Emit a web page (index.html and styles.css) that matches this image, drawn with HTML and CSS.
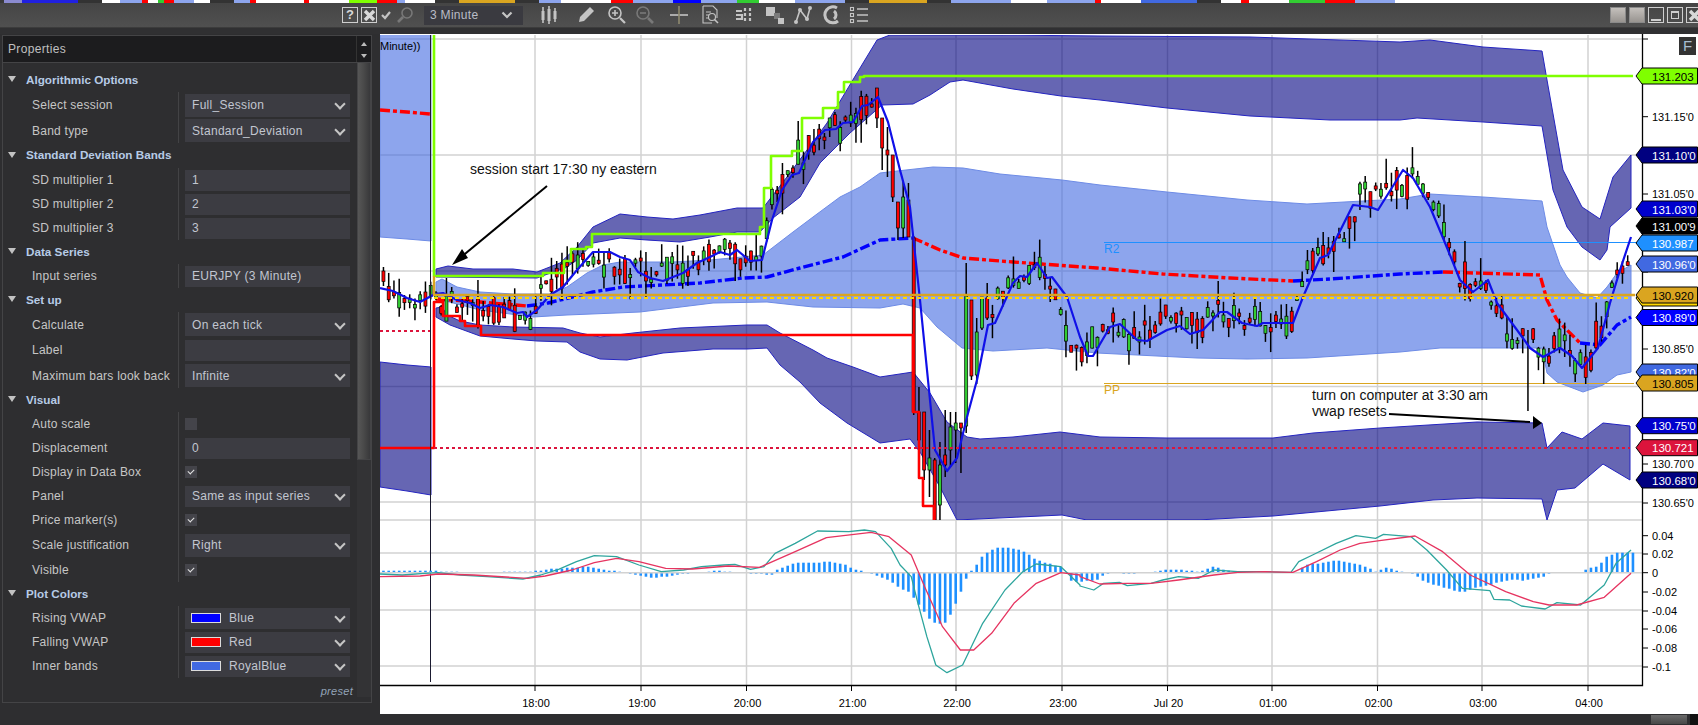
FILE: index.html
```html
<!DOCTYPE html>
<html lang="en">
<head>
    <meta charset="UTF-8">
    <meta name="viewport" content="width=device-width, initial-scale=1.0">
    <title>Chart properties</title>
    <link rel="stylesheet" href="styles.css">
</head>
<body>

<div class="strip" id="strip"></div>

<div class="titlebar">
    <div class="title-left">
        <span class="win-btn win-help">?</span>
        <span class="win-btn win-close">
            <svg viewBox="0 0 15 15" width="15" height="15"><path d="M3 3l9 9M12 3l-9 9" class="ico-x"/></svg>
        </span>
    </div>
    <div class="tools">
        <svg class="tool tool-check" viewBox="0 0 12 12" width="12" height="12"><path d="M2 6l3 3 5-6" class="ico-bold"/></svg>
        <svg class="tool tool-find" viewBox="0 0 20 20" width="20" height="20"><circle cx="12" cy="8" r="5" class="ico-dim"/><path d="M8 12l-5 5" class="ico-dim-bold"/></svg>
        <div class="interval"><span>3 Minute</span>
            <svg viewBox="0 0 12 8" width="12" height="8"><path d="M1.5 1.5L6 6l4.500-4.500" class="ico-bold"/></svg>
        </div>
        <svg class="tool tool-bars" viewBox="0 0 20 20" width="20" height="20"><path d="M4 2v16M10 1v18M16 3v14" class="ico"/><rect x="2.500" y="6" width="3" height="9" class="ico-fill"/><rect x="8.500" y="4" width="3" height="12" class="ico-fill"/><rect x="14.500" y="6" width="3" height="8" class="ico-fill"/></svg>
        <svg class="tool tool-pencil" viewBox="0 0 20 20" width="20" height="20"><path d="M3 17l1-5L14 2l4 4L8 16z" class="ico-fill"/></svg>
        <svg class="tool tool-zoom-in" viewBox="0 0 20 20" width="20" height="20"><circle cx="8" cy="8" r="6" class="ico"/><path d="M5 8h6M8 5v6" class="ico"/><path d="M13 13l5 5" class="ico-bold"/></svg>
        <svg class="tool tool-zoom-out" viewBox="0 0 20 20" width="20" height="20"><circle cx="8" cy="8" r="6" class="ico-dim"/><path d="M5 8h6" class="ico-dim"/><path d="M13 13l5 5" class="ico-dim-bold"/></svg>
        <svg class="tool tool-cross" viewBox="0 0 20 20" width="20" height="20"><path d="M1 10h18" class="ico"/><path d="M10 1v18" class="ico-line"/></svg>
        <svg class="tool tool-box" viewBox="0 0 20 20" width="20" height="20"><path d="M3 1h10l4 4v8M3 1v17h9" class="ico-thin"/><path d="M6 7h5M6 10h3M6 13h3" class="ico-thin"/><circle cx="12" cy="12" r="3.500" class="ico-thin"/><path d="M14.500 14.500l3.500 3.500" class="ico"/></svg>
        <svg class="tool tool-rows" viewBox="0 0 20 20" width="20" height="20"><path d="M1 6h6M1 10h6v4H1M10 3v3M10 8v3M10 13v3M15 3v3M15 8v3M15 13v3" class="ico-bold"/></svg>
        <svg class="tool tool-stack" viewBox="0 0 20 20" width="20" height="20"><rect x="1" y="2" width="9" height="9" class="ico-fill"/><rect x="9" y="8" width="6" height="6" class="ico-dark"/><rect x="13" y="13" width="6" height="6" class="ico-fill"/></svg>
        <svg class="tool tool-nodes" viewBox="0 0 20 20" width="20" height="20"><path d="M3 17L7 5l7 9 3-11" class="ico"/><circle cx="3" cy="17" r="2" class="ico-fill"/><circle cx="7" cy="5" r="2" class="ico-fill"/><circle cx="14" cy="14" r="2" class="ico-fill"/><circle cx="17" cy="3" r="2" class="ico-fill"/></svg>
        <svg class="tool tool-ring" viewBox="0 0 20 20" width="20" height="20"><path d="M16 3a8 8 0 1 0 1 13" class="ico-ring"/><path d="M13 6a5 5 0 0 1 0 8" class="ico-ring"/></svg>
        <svg class="tool tool-list" viewBox="0 0 20 20" width="20" height="20"><path d="M8 4h11M8 10h11M8 16h11" class="ico"/><rect x="1.500" y="2.500" width="3" height="3" class="ico-thin"/><rect x="1.500" y="8.500" width="3" height="3" class="ico-thin"/><rect x="1.500" y="14.500" width="3" height="3" class="ico-thin"/></svg>
    </div>
    <div class="win-group">
        <span class="win-btn win-solid"></span>
        <span class="win-btn win-solid"></span>
        <span class="win-btn win-min"></span>
        <span class="win-btn win-max"></span>
        <span class="win-btn win-close win-cut">
            <svg viewBox="0 0 15 15" width="15" height="15"><path d="M3 3l9 9M12 3l-9 9" class="ico-x"/></svg>
        </span>
    </div>
</div>
<div class="band"></div>

<div class="main">
    <aside class="panel">
        <div class="box">
            <div class="box-head">
                <span class="box-title">Properties</span>
                <div class="box-arrows"><i class="up"></i><i class="down"></i></div>
            </div>
            <div class="box-body">
                <div class="props">
                    <div class="cat"><i></i>Algorithmic Options</div>
                    <div class="row sel row-tall"><label>Select session</label><div class="val"><div class="field drop">Full_Session</div></div></div>
                    <div class="row sel"><label>Band type</label><div class="val"><div class="field drop">Standard_Deviation</div></div></div>
                    <div class="cat cat-mid"><i></i>Standard Deviation Bands</div>
                    <div class="row"><label>SD multiplier 1</label><div class="val"><div class="field">1</div></div></div>
                    <div class="row"><label>SD multiplier 2</label><div class="val"><div class="field">2</div></div></div>
                    <div class="row"><label>SD multiplier 3</label><div class="val"><div class="field">3</div></div></div>
                    <div class="cat"><i></i>Data Series</div>
                    <div class="row"><label>Input series</label><div class="val"><div class="field">EURJPY (3 Minute)</div></div></div>
                    <div class="cat"><i></i>Set up</div>
                    <div class="row sel"><label>Calculate</label><div class="val"><div class="field drop">On each tick</div></div></div>
                    <div class="row row-tall"><label>Label</label><div class="val"><div class="field"></div></div></div>
                    <div class="row sel"><label>Maximum bars look back</label><div class="val"><div class="field drop">Infinite</div></div></div>
                    <div class="cat"><i></i>Visual</div>
                    <div class="row"><label>Auto scale</label><div class="val"><span class="check"></span></div></div>
                    <div class="row"><label>Displacement</label><div class="val"><div class="field">0</div></div></div>
                    <div class="row"><label>Display in Data Box</label><div class="val"><span class="check on"></span></div></div>
                    <div class="row"><label>Panel</label><div class="val"><div class="field drop">Same as input series</div></div></div>
                    <div class="row"><label>Price marker(s)</label><div class="val"><span class="check on"></span></div></div>
                    <div class="row sel row-tall"><label>Scale justification</label><div class="val"><div class="field drop">Right</div></div></div>
                    <div class="row"><label>Visible</label><div class="val"><span class="check on"></span></div></div>
                    <div class="cat"><i></i>Plot Colors</div>
                    <div class="row"><label>Rising VWAP</label><div class="val"><div class="field drop"><b class="swatch blue"></b>Blue</div></div></div>
                    <div class="row"><label>Falling VWAP</label><div class="val"><div class="field drop"><b class="swatch red"></b>Red</div></div></div>
                    <div class="row"><label>Inner bands</label><div class="val"><div class="field drop"><b class="swatch royal"></b>RoyalBlue</div></div></div>
                    <div class="preset">preset</div>
                </div>
                <div class="track"><div class="thumb"></div></div>
            </div>
        </div>
    </aside>

    <section class="chart-wrap">
        <svg class="chart" id="chart" width="1318" height="680" viewBox="380 34 1318 680"></svg>
        <div class="bottom">
            <div class="hscroll"></div>
            <div class="hbtn"></div>
        </div>
    </section>
</div>

<script src="chart.js"></script>
</body>
</html>
```

FILE: styles.css
```css
* {
    box-sizing: border-box;
}

body {
    margin: 0;
    width: 1698px;
    height: 725px;
    overflow: hidden;
    background-color: #2e2e30;
    font-family: "Liberation Sans", Arial, sans-serif;
    font-size: 12px;
    color: #c6c6c6;
}

/* bout de la fenetre de derriere */
.strip {
    display: flex;
    height: 3px;
    background-color: #fff;
}

.strip span {
    display: block;
    height: 3px;
}

.titlebar {
    display: flex;
    align-items: center;
    height: 24px;
    background: linear-gradient(#454545, #505050);
}

.title-left {
    display: flex;
    gap: 3px;
    width: 380px;
    padding-left: 342px;
}

.tools {
    display: flex;
    align-items: center;
    flex: 1;
    position: relative;
    height: 24px;
}

.tool {
    position: absolute;
    top: 2px;
}

.tool-check { left: 0; top: 6px; }
.tool-find { left: 15px; }
.tool-bars { left: 159px; }
.tool-pencil { left: 196px; }
.tool-zoom-in { left: 227px; }
.tool-zoom-out { left: 255px; }
.tool-cross { left: 289px; }
.tool-box { left: 320px; }
.tool-rows { left: 355px; }
.tool-stack { left: 385px; }
.tool-nodes { left: 413px; }
.tool-ring { left: 441px; }
.tool-list { left: 469px; }

.ico { fill: none; stroke: #c4c4c4; stroke-width: 1.6; }
.ico-thin { fill: none; stroke: #c4c4c4; stroke-width: 1.1; }
.ico-bold { fill: none; stroke: #c4c4c4; stroke-width: 2.2; }
.ico-ring { fill: none; stroke: #c4c4c4; stroke-width: 3; }
.ico-line { fill: none; stroke: #8f8a70; stroke-width: 1.6; }
.ico-fill { fill: #c4c4c4; }
.ico-dark { fill: #7a7a7a; }
.ico-dim { fill: none; stroke: #787878; stroke-width: 1.6; }
.ico-dim-bold { fill: none; stroke: #787878; stroke-width: 2.6; }
.ico-x { fill: none; stroke: #d8d8d8; stroke-width: 3.4; }

.interval {
    display: flex;
    align-items: center;
    justify-content: space-between;
    margin-left: 44px;
    width: 99px;
    height: 19px;
    padding: 0 10px 0 6px;
    background-color: #3a3a40;
    color: #b9bcc6;
    letter-spacing: .3px;
}

.win-group {
    display: flex;
    gap: 3px;
    padding-right: 0;
    width: 88px;
}

.win-btn {
    display: block;
    flex: none;
    width: 16px;
    height: 16px;
    border: 1px solid #cfcfcf;
    font-weight: bold;
    font-size: 13px;
    line-height: 14px;
    text-align: center;
    color: #d8d8d8;
}

.win-solid {
    background: linear-gradient(#c4c0bc, #989490);
    border-color: #8a8a8a;
}

.win-min {
    background: linear-gradient(#cfcfcf, #cfcfcf) no-repeat center 11px / 10px 2px;
}

.win-max {
    background: linear-gradient(#cfcfcf, #cfcfcf) no-repeat center 3px / 10px 2px;
    box-shadow: inset 0 0 0 3px #4c4c4c, inset 0 0 0 4px #cfcfcf;
}

.win-cut {
    width: 12px;
    border-right: 0;
    overflow: hidden;
}

.band {
    height: 7px;
    background-color: #303032;
    border-top: 1px solid #3c3c3c;
}

.main {
    display: flex;
    height: 691px;
}

/* panneau de gauche */
.panel {
    width: 380px;
    padding: 1px 8px 0 2px;
    flex: none;
}

.box {
    height: 668px;
    border: 1px solid #444446;
}

.box-head {
    display: flex;
    height: 27px;
    background-color: #1c1c1e;
    border-bottom: 1px solid #444446;
}

.box-title {
    flex: 1;
    padding: 6px 0 0 5px;
    color: #c0c0c0;
    letter-spacing: .35px;
}

.box-arrows {
    width: 15px;
    border-left: 1px solid #333;
    display: flex;
    flex-direction: column;
    align-items: center;
    gap: 8px;
    padding-top: 6px;
}

.box-arrows i {
    width: 0;
    height: 0;
    border-left: 3px solid transparent;
    border-right: 3px solid transparent;
}

.box-arrows .up { border-bottom: 4px solid #bbb; }
.box-arrows .down { border-top: 4px solid #bbb; }

.box-body {
    display: flex;
    background-color: #2e2e30;
}

.props {
    flex: 1;
    padding-top: 5px;
}

.cat {
    display: flex;
    align-items: center;
    height: 24px;
    padding: 0 0 2px 5px;
    font-size: 11.700px;
    font-weight: bold;
    color: #b6cbe6;
}

.cat-mid {
    height: 25px;
}

.cat i {
    width: 0;
    height: 0;
    margin-right: 10px;
    border-left: 4.500px solid transparent;
    border-right: 4.500px solid transparent;
    border-top: 6px solid #c2c2c2;
}

.row {
    display: flex;
    align-items: stretch;
    height: 24px;
}

.row.sel {
    height: 25px;
}

.row.row-tall {
    height: 26px;
}

.row label {
    display: flex;
    align-items: center;
    width: 175px;
    padding-left: 29px;
    white-space: nowrap;
    letter-spacing: .24px;
}

.val {
    display: flex;
    align-items: center;
    width: 172px;
    padding-left: 6px;
    border-left: 1px solid #434345;
}

.field {
    display: flex;
    align-items: center;
    width: 165px;
    height: 21px;
    padding-left: 7px;
    background-color: #3c3c42;
    color: #c2c6d0;
    letter-spacing: .3px;
}

.sel .field {
    height: 23px;
}

.drop {
    position: relative;
}

.drop::after {
    content: "";
    position: absolute;
    right: 6px;
    top: 50%;
    width: 6px;
    height: 6px;
    margin-top: -5px;
    border-right: 2px solid #c6c6c6;
    border-bottom: 2px solid #c6c6c6;
    transform: rotate(45deg);
}

.check {
    display: block;
    position: relative;
    width: 12px;
    height: 12px;
    background-color: #44444a;
}

.check.on::after {
    content: "";
    position: absolute;
    left: 3px;
    top: 3px;
    width: 5px;
    height: 3px;
    border-left: 1.500px solid #e4e4e4;
    border-bottom: 1.500px solid #e4e4e4;
    transform: rotate(-45deg);
}

.swatch {
    display: block;
    width: 30px;
    height: 10px;
    margin: 0 8px 0 -1px;
    border: 1px solid #dcdcdc;
}

.swatch.blue { background-color: #0000ff; }
.swatch.red { background-color: #ff0000; }
.swatch.royal { background-color: #4169e1; }

.preset {
    padding: 7px 0 0 0;
    margin-right: 4px;
    text-align: right;
    font-size: 11px;
    font-style: italic;
    color: #93a4b8;
    letter-spacing: .3px;
}

.track {
    width: 14px;
    background-color: #333335;
    flex: none;
}

.thumb {
    height: 397px;
    background: linear-gradient(90deg, #565656, #4a4a4a 45%, #38383a);
    border: 1px solid #444446;
    border-top: 0;
}

/* le graphique */
.chart-wrap {
    display: flex;
    flex-direction: column;
    width: 1318px;
}

.chart {
    display: block;
    background-color: #fff;
}

.bottom {
    display: flex;
    justify-content: flex-end;
    height: 11px;
    background-color: #2e2e30;
}

.hscroll {
    width: 36px;
    height: 9px;
    margin: 1px 3px 0 0;
    background: linear-gradient(#6a6a6a, #484848);
}

.hbtn {
    width: 8px;
    background-color: #111;
}

.ax { font-size: 11px; fill: #000; }
.ax-time { font-size: 11px; fill: #000; text-anchor: middle; }
.flag-text { font-size: 11.500px; }
.note { font-size: 14px; fill: #111; }
.pp-gold { font-size: 12px; fill: #daa520; }
.pp-blue { font-size: 12px; fill: #1e90ff; }
.f-box { font-size: 15px; fill: #a8bcd0; }
.grid { stroke: #d2d2d2; stroke-width: 1.500; fill: none; }
.band-outer { fill: rgba(0, 0, 128, .6); stroke: #2424c0; stroke-width: 1; }
.band-inner { fill: rgba(65, 105, 225, .6); stroke: #6d8be6; stroke-width: 1; }
```

FILE: chart.js
```js
// dessine tout le graphique dans le svg, coordonnees en pixels de la page
var svg = document.getElementById('chart');
var out = '';

function pts(list) {
    return list.map(function(p) { return p[0] + ',' + p[1]; }).join(' ');
}

function line(list, color, w, dash) {
    out += '<polyline fill="none" stroke-linejoin="round" stroke="' + color + '" stroke-width="' + w + '" points="' + pts(list) + '"' +
        (dash ? ' stroke-dasharray="' + dash + '"' : '') + '/>';
}

function hline(x1, x2, y, color, w, dash) {
    line([[x1, y], [x2, y]], color, w, dash);
}

function text(x, y, str, cls, extra) {
    out += '<text x="' + x + '" y="' + y + '" class="' + cls + '"' + (extra || '') + '>' + str + '</text>';
}

// interpolation simple sur une liste de points
function at(list, x) {
    for (var i = 1; i < list.length; i++) {
        if (x <= list[i][0]) {
            var a = list[i - 1], b = list[i];
            return a[1] + (b[1] - a[1]) * (x - a[0]) / (b[0] - a[0]);
        }
    }
    return list[list.length - 1][1];
}

var hours = [535, 641, 746.5, 851.5, 956, 1062, 1167.5, 1272, 1377.5, 1482, 1588];
var names = ['18:00', '19:00', '20:00', '21:00', '22:00', '23:00', 'Jul 20', '01:00', '02:00', '03:00', '04:00'];

// grille
[39, 155, 271, 386.5, 502, 520, 553, 610, 666].forEach(function(y) {
    out += '<path class="grid" d="M380 ' + y + 'H1642"/>';
});
hours.forEach(function(x) {
    out += '<path class="grid" d="M' + x + ' 35V685"/>';
});

out += '<clipPath id="price"><rect x="380" y="35" width="1262" height="485"/></clipPath>';
out += '<g clip-path="url(#price)">';

// bandes de la session d'avant
out += '<polygon class="band-inner" points="380,33 431,33 431,241 407,239 380,237"/>';
out += '<polygon class="band-outer" points="380,362 407,365 431,367 431,495 407,491 380,487"/>';

var outerTop = [[436,269],[448,266],[473,269],[513,269],[537,272],[560,263],[577,247],[593,227],[620,214],[647,217],[673,219],[700,215],[737,208],[763,208],[790,173],[827,123],[857,73],[877,40],[890,35],[913,35],[1000,35],[1100,36],[1250,37],[1400,42],[1430,40],[1483,47],[1542,51],[1547,80],[1563,170],[1582,207],[1600,219],[1613,177],[1631,155]];
var outerTopLow = [[436,277],[537,278],[545,275],[565,268],[577,260],[593,243],[620,238],[647,240],[680,242],[710,237],[737,232],[760,232],[773,218],[800,197],[820,163],[850,133],[882,105],[913,104],[930,95],[950,82],[963,80],[1013,89],[1061,96],[1100,100],[1167,108],[1250,116],[1330,120],[1400,120],[1417,118],[1483,122],[1542,126],[1553,190],[1567,227],[1582,247],[1600,260],[1607,250],[1610,227],[1631,208]];
var innerTop = [[436,282],[442,279],[457,287],[480,292],[513,294],[550,294],[567,287],[587,273],[603,265],[620,262],[647,262],[673,262],[710,260],[763,255],[793,232],[813,217],[840,197],[860,187],[880,173],[897,171],[933,167],[963,168],[1000,174],[1062,180],[1100,185],[1167,192],[1247,200],[1307,204],[1400,199],[1430,194],[1483,197],[1542,201],[1547,227],[1560,265],[1567,277],[1580,293],[1597,298],[1607,287],[1617,273],[1631,265]];
var innerLow = [[436,297],[442,300],[480,310],[533,317],[567,315],[640,312],[713,303],[767,302],[813,307],[880,308],[903,304],[920,308],[937,327],[962,348],[993,351],[1047,348],[1097,353],[1197,358],[1247,359],[1307,358],[1400,352],[1440,348],[1483,348],[1542,348],[1547,373],[1557,382],[1583,392],[1603,385],[1617,375],[1631,372]];
var lowTop = [[436,308],[442,307],[447,315],[460,321],[480,325],[513,327],[563,328],[580,333],[600,337],[633,333],[680,328],[747,325],[767,325],[780,333],[813,350],[827,358],[853,367],[880,377],[913,372],[930,393],[947,422],[967,437],[980,439],[1013,437],[1060,432],[1100,437],[1167,438],[1273,438],[1313,433],[1380,428],[1477,422],[1542,423],[1547,448],[1562,432],[1582,439],[1603,423],[1630,426]];
var lowBottom = [[436,317],[450,325],[480,336],[513,339],[537,341],[567,342],[580,352],[600,359],[627,360],[663,353],[713,349],[747,349],[767,348],[780,365],[800,382],[820,403],[847,423],[880,443],[910,439],[920,452],[940,487],[957,520],[1062,515],[1087,520],[1197,520],[1273,516],[1380,506],[1433,500],[1477,498],[1542,499],[1547,520],[1557,490],[1575,488],[1603,464],[1630,480]];

function band(up, low, cls) {
    out += '<polygon class="' + cls + '" points="' + pts(up.concat(low.slice().reverse())) + '"/>';
}
band(innerTop, innerLow, 'band-inner');
band(outerTop, outerTopLow, 'band-outer');
band(lowTop, lowBottom, 'band-outer');

// pivots R2 et PP
hline(1104, 1640, 242.5, '#1e90ff', 1);
hline(1104, 1634, 383.5, '#daa520', 1);
text(1104, 253, 'R2', 'pp-blue');
text(1104, 394, 'PP', 'pp-gold');

// le milieu de session, en pointilles
var dashdot = '10,3,4,3';
line([[380,110],[407,112],[430,114]], '#ff0000', 3.4, dashdot);
line([[436,299],[480,302],[527,306]], '#ff0000', 3.4, dashdot);
line([[527,306],[548,303],[593,292],[623,287],[663,285],[700,283],[743,278],[767,277],[800,268],[843,257],[880,240],[913,238]], '#0000ff', 3.4, dashdot);
line([[913,238],[940,250],[963,258],[1013,262],[1097,268],[1163,274],[1230,278],[1293,281]], '#ff0000', 3.4, dashdot);
line([[1293,281],[1330,279],[1400,274],[1443,272]], '#0000ff', 3.4, dashdot);
line([[1443,272],[1540,275],[1547,300],[1557,320],[1580,343]], '#ff0000', 3.4, dashdot);
line([[1580,343],[1600,345],[1617,325],[1631,317]], '#0000ff', 3.4, dashdot);

// bougies : generees a partir d'un chemin de prix, sauf la grosse chute
var path = [[380,285],[400,292],[420,300],[432,280],[440,300],[480,305],[530,315],[545,285],[570,265],[590,255],[610,265],[640,268],[650,275],[690,265],[710,250],[740,255],[760,255],[770,210],[790,170],[810,150],[830,130],[850,125],[870,100],[880,110],[975,300],[990,310],[1010,290],[1030,270],[1050,280],[1070,340],[1090,350],[1110,320],[1130,335],[1150,330],[1175,315],[1200,325],[1220,310],[1245,320],[1290,320],[1300,280],[1320,250],[1345,240],[1360,195],[1375,195],[1395,190],[1410,175],[1430,190],[1445,240],[1460,280],[1480,290],[1495,300],[1510,335],[1530,330],[1545,360],[1560,335],[1575,360],[1585,370],[1600,330],[1615,275],[1630,250]];
var fixed = {
    65: [88, 128, 88, 118, 'r'], 66: [118, 170, 118, 148, 'r'], 67: [127, 177, 150, 155, 'r'],
    68: [155, 202, 155, 197, 'r'], 69: [202, 240, 202, 228, 'r'], 70: [182, 238, 197, 228, 'g'],
    71: [183, 237, 200, 237, 'r'], 72: [236, 415, 238, 412, 'r'], 73: [387, 463, 412, 440, 'r'],
    74: [412, 480, 412, 470, 'r'], 75: [430, 497, 458, 470, 'g'], 76: [458, 520, 460, 520, 'r'],
    77: [442, 520, 465, 505, 'g'], 78: [410, 477, 455, 465, 'r'], 79: [412, 467, 427, 450, 'g'],
    80: [412, 463, 423, 430, 'g'], 81: [423, 473, 423, 428, 'r'], 82: [263, 433, 296, 426, 'g'],
    83: [300, 380, 300, 376, 'r'], 84: [318, 384, 332, 375, 'g'], 85: [297, 330, 297, 328, 'g'],
    86: [283, 320, 298, 318, 'r'], 189: [330, 411, 352, 352, 'r']
};

var seed = 7;
function rnd() {
    seed = (seed * 16807) % 2147483647;
    return seed / 2147483647;
}

for (var k = -29; k <= 208; k++) {
    var x = 535.7 + k * 5.25;
    var c = fixed[k];
    if (!c) {
        var mid = at(path, x) + (rnd() - .5) * 20;
        var half = 1.5 + rnd() * rnd() * 14;
        var up = rnd() * rnd() * 26;
        var down = rnd() * rnd() * 26;
        c = [mid - half - up, mid + half + down, mid - half, mid + half, rnd() > .5 ? 'r' : 'g'];
    }
    out += '<path d="M' + x + ' ' + c[0].toFixed(1) + 'V' + c[1].toFixed(1) + '" stroke="#000" stroke-width="1.500"/>';
    out += '<rect x="' + (x - 1.5) + '" y="' + c[2].toFixed(1) + '" width="3" height="' + (c[3] - c[2]).toFixed(1) +
        '" fill="' + (c[4] === 'r' ? '#ff0000' : '#32cd32') + '" stroke="#000" stroke-width=".7"/>';
}

// la vwap
line([[380,288],[393,291],[407,298],[420,302],[435,294],[443,293],[457,300],[470,303],[480,308],[490,305],[503,307],[517,313],[523,312],[527,317],[537,310],[550,295],[563,287],[577,270],[593,252],[610,252],[620,257],[630,260],[638,272],[650,278],[663,281],[683,273],[697,263],[710,257],[720,252],[730,255],[737,250],[750,261],[762,260],[772,220],[782,190],[792,175],[799,173],[813,142],[825,130],[836,129],[843,123],[853,122],[862,106],[868,105],[878,97],[888,122],[900,170],[910,207],[920,300],[935,450],[947,471],[957,458],[967,417],[977,380],[988,325],[995,323],[1013,283],[1020,276],[1027,277],[1037,263],[1047,278],[1052,277],[1067,297],[1080,337],[1088,356],[1093,356],[1110,327],[1120,324],[1137,340],[1147,341],[1167,330],[1180,326],[1190,334],[1203,330],[1220,312],[1227,312],[1242,323],[1257,326],[1263,323],[1293,323],[1303,297],[1320,258],[1328,255],[1353,205],[1370,207],[1378,210],[1403,170],[1413,178],[1430,207],[1443,238],[1452,260],[1460,280],[1473,292],[1488,280],[1497,303],[1517,330],[1530,348],[1543,357],[1560,348],[1572,356],[1582,368],[1598,348],[1610,303],[1620,270],[1631,237]], '#1010e8', 2.2);

// hauts et bas de session
line([[434,35],[434,276],[543,276],[543,273],[564,273],[564,261],[571,261],[571,249],[586,249],[586,247],[592,247],[592,234],[760,234],[760,227],[764,227],[764,188],[771,188],[771,156],[792,156],[792,151],[802,151],[802,118],[823,118],[823,108],[838,108],[838,92],[844,92],[844,82],[860,82],[860,77],[864,77],[864,76],[1633,76]], '#7fff00', 2.6);
hline(380, 431, 448, '#ff0000', 2.6);
line([[431,448],[434,448],[434,302],[443,302],[443,316],[460,316],[460,321],[465,321],[465,326],[481,326],[481,335],[913,335],[913,412],[919,412],[919,478],[923,478],[923,506],[934,506],[934,522]], '#ff0000', 2.6);
hline(380, 431, 331, '#dc143c', 2, '3,3');
hline(434, 1630, 448, '#dc143c', 2, '3,3');
line([[434,276],[434,295],[1635,295]], '#daa520', 2.4);
hline(434, 1628, 298, '#ffd700', 2, '4,3');
out += '</g>';

// ligne de depart de session
out += '<path d="M430.500 35V682" stroke="#1a1a30" stroke-width="1"/>';
text(380, 50, 'Minute))', 'ax');

// notes
text(470, 174, 'session start 17:30 ny eastern', 'note');
text(1312, 400, 'turn on computer at 3:30 am', 'note');
text(1312, 416, 'vwap resets', 'note');
line([[547,186],[460,258]], '#000', 2);
out += '<polygon points="452,265 462,249 468,258" fill="#000"/>';
line([[1389,414],[1530,422]], '#000', 2);
out += '<polygon points="1542,423 1533,416 1533,429" fill="#000"/>';

// macd
var z = 572.7;
function macdA(xs) { return xs.map(function(p) { return [380 + p[0] / 2.24, 520 + p[1] / 3]; }); }
function macdB(xs) { return xs.map(function(p) { return [1080 + p[0] / 2.537, 520 + p[1] / 3]; }); }

var hist = [[380,2],[400,2],[430,2],[445,1],[470,0],[530,1],[545,3],[570,5],[590,6],[600,4],[612,2],[625,0],[635,-2],[650,-5],[665,-4],[680,-1],[700,0],[715,2],[740,0],[755,-1],[772,-2],[775,2],[790,8],[800,10],[815,10],[830,11],[845,8],[850,5],[860,2],[875,-2],[890,-8],[900,-15],[910,-20],[920,-33],[930,-47],[936,-51],[945,-50],[952,-40],[962,-16],[969,0],[974,4],[983,18],[994,24],[1000,26],[1023,22],[1036,13],[1045,10],[1063,5],[1070,-8],[1080,-9],[1092,-8],[1100,-6],[1104,-1],[1119,0],[1127,-1],[1151,0],[1163,3],[1178,3],[1198,1],[1214,6],[1226,2],[1238,0],[1297,0],[1305,8],[1316,9],[1336,12],[1356,9],[1372,4],[1377,0],[1383,4],[1389,5],[1399,1],[1407,0],[1415,-2],[1425,-9],[1435,-12],[1454,-18],[1462,-20],[1474,-15],[1490,-12],[1498,-10],[1510,-7],[1525,-8],[1545,-4],[1551,0],[1580,0],[1588,4],[1598,7],[1608,17],[1616,20],[1632,20]];
for (k = -29; k <= 209; k++) {
    x = 535.7 + k * 5.25;
    var h = Math.round(at(hist, x));
    if (h === 0) { continue; }
    out += '<rect x="' + (x - 1.3) + '" y="' + (h > 0 ? z - h : z) + '" width="2.600" height="' + Math.abs(h) + '" fill="#1e90ff"/>';
}
out += '<path class="grid" d="M380 ' + z + 'H1642"/>';

var teal = macdA([[0,162],[50,165],[100,160],[130,158],[180,165],[240,170],[320,177],[360,165],[400,148],[440,125],[480,107],[530,110],[580,135],[630,155],[680,150],[720,140],[770,135],[795,133],[830,148],[860,140],[885,100],[930,70],[980,33],[1050,35],[1085,30],[1110,35],[1145,85],[1165,135],[1190,170],[1205,250],[1225,350],[1245,435],[1270,458],[1305,435],[1350,310],[1400,210],[1440,155],[1470,132],[1525,140],[1568,195]])
    .concat(macdB([[0,198],[35,210],[60,190],[100,187],[120,197],[180,190],[210,180],[250,170],[300,175],[340,150],[400,155],[470,155],[535,157],[555,125],[590,105],[650,70],[700,47],[750,55],[770,43],[840,50],[880,90],[930,150],[970,205],[1040,212],[1050,238],[1090,240],[1120,258],[1180,267],[1210,248],[1270,255],[1295,230],[1330,195],[1360,130],[1398,90]]));
var pink = macdA([[0,170],[90,168],[130,162],[210,165],[330,175],[370,168],[430,150],[480,128],[530,115],[580,125],[640,145],[700,147],[780,138],[850,142],[930,95],[1000,53],[1100,37],[1140,50],[1190,105],[1220,200],[1260,320],[1300,390],[1330,390],[1370,340],[1420,250],[1470,190],[1525,158],[1568,165]])
    .concat(macdB([[0,170],[50,192],[120,190],[180,190],[250,180],[340,165],[400,157],[470,155],[540,157],[600,125],[660,90],[710,70],[760,62],[850,48],[920,95],[990,165],[1080,215],[1150,245],[1190,255],[1260,255],[1330,232],[1398,160]]));
line(teal, '#2ea59d', 1.3);
line(pink, '#e63460', 1.3);

// axes
out += '<rect x="1643" y="34" width="55" height="680" fill="#fff"/>';
out += '<path d="M1642.500 34V685.500H380" fill="none" stroke="#000" stroke-width="1.300"/>';
hours.forEach(function(x, i) {
    out += '<path d="M' + x + ' 686V691" stroke="#000" stroke-width="1"/>';
    text(x + 1, 707, names[i], 'ax-time');
});

function tick(y, str) {
    out += '<path d="M1643 ' + y + 'H1648" stroke="#000" stroke-width="1"/>';
    text(1652, y + 4, str, 'ax');
}
tick(39, '');
tick(116.7, "131.15'0");
tick(194, "131.05'0");
tick(272, '');
tick(310, '');
tick(349, "130.85'0");
tick(464, "130.70'0");
tick(503, "130.65'0");
[[535.7,'0.04'],[554,'0.02'],[572.7,'0'],[592,'-0.02'],[611,'-0.04'],[629,'-0.06'],[648,'-0.08'],[667,'-0.1']].forEach(function(t) {
    tick(t[0], t[1]);
});

function flag(y, str, bg, fg) {
    out += '<polygon points="1636,' + y + ' 1642,' + (y - 8) + ' 1697.500,' + (y - 8) + ' 1697.500,' + (y + 8) + ' 1642,' + (y + 8) +
        '" fill="' + bg + '" stroke="#000" stroke-width="1"/>';
    if (str) {
        text(1652, y + 4.5, str, 'flag-text', ' fill="' + fg + '"');
    }
}
flag(76, '131.203', '#7fff00', '#000');
flag(155, "131.10'0", '#000080', '#fff');
flag(209, "131.03'0", '#0000cd', '#fff');
flag(226, "131.00'9", '#000', '#fff');
flag(243, '130.987', '#1e90ff', '#fff');
flag(264, "130.96'0", '#4169e1', '#fff');
flag(298, '', '#ffd700', '#000');
flag(295, '130.920', '#daa520', '#000');
flag(317.5, "130.89'0", '#0000ff', '#fff');
flag(372, "130.82'0", '#4169e1', '#fff');
flag(383, '130.805', '#daa520', '#000');
flag(425.7, "130.75'0", '#0000cd', '#fff');
flag(447.7, '130.721', '#dc143c', '#fff');
flag(480, "130.68'0", '#000080', '#fff');

// bouton F
out += '<rect x="1679" y="37" width="17" height="18" fill="#333"/>';
text(1683, 51, 'F', 'f-box');

svg.innerHTML = out;

// petite bande de la fenetre de derriere
var stripColors = [[4,'#3a3a3a'],[18,'#8b8bd0'],[56,'#2020e0'],[24,'#333'],[18,'#fff'],[22,'#8da5ed'],[6,'#ff0000'],[10,'#fff'],[6,'#32cd32'],[10,'#ff0000'],[20,'#8da5ed'],[16,'#fff'],[24,'#333'],[16,'#8da5ed'],[6,'#ff0000'],[48,'#fff'],[5,'#ff0000'],[40,'#fff'],[28,'#7fff00'],[20,'#ff0000'],[8,'#8da5ed'],[30,'#fff'],[24,'#333'],[56,'#daa520'],[24,'#333'],[22,'#8da5ed'],[50,'#fff'],[22,'#ff0000'],[40,'#8da5ed'],[28,'#0000ff'],[36,'#8da5ed'],[22,'#32cd32'],[36,'#fff'],[50,'#8da5ed'],[24,'#333'],[58,'#daa520'],[24,'#333'],[60,'#8da5ed'],[36,'#fff'],[48,'#8da5ed'],[6,'#ff0000'],[40,'#fff'],[56,'#4169e1'],[24,'#333'],[20,'#fff'],[8,'#ff0000'],[40,'#fff'],[36,'#32cd32'],[30,'#ff0000'],[40,'#8da5ed'],[210,'#fff']];
document.getElementById('strip').innerHTML = stripColors.map(function(s) {
    return '<span style="width:' + s[0] + 'px;background-color:' + s[1] + '"></span>';
}).join('');
```
